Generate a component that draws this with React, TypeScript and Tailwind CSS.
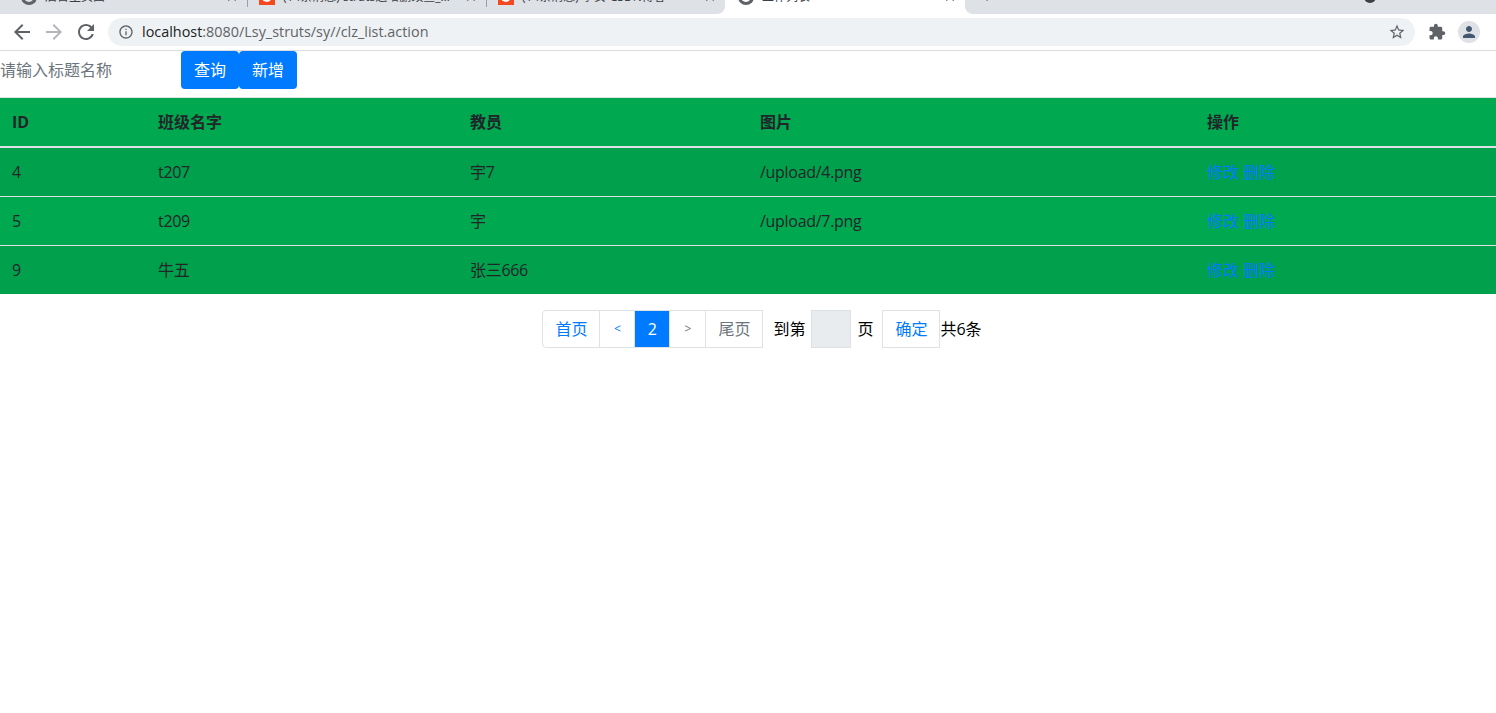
import type { ReactNode } from "react";

const rows = [
  { id: "4", name: "t207", teacher: "宇7", pic: "/upload/4.png", bg: "bg-[#00a04c]", h: "h-[50px]", pad: "pt-px" },
  { id: "5", name: "t209", teacher: "宇", pic: "/upload/7.png", bg: "bg-[#00a84f]", h: "h-[49px] border-t border-[#dee2e6]", pad: "pb-px" },
  { id: "9", name: "牛五", teacher: "张三666", pic: "", bg: "bg-[#00a04c]", h: "h-[48px] border-t border-[#dee2e6]", pad: "pt-px" },
];

const font = "font-['Open_Sans','Noto_Sans_CJK_SC',sans-serif]";

// Material paths, same ones chrome draws in its toolbar
const icons = {
  back: "M20 11H7.83l5.59-5.59L12 4l-8 8 8 8 1.41-1.41L7.83 13H20v-2z",
  forward: "M12 4l-1.41 1.41L16.17 11H4v2h12.17l-5.58 5.59L12 20l8-8z",
  reload:
    "M17.65 6.35C16.2 4.9 14.21 4 12 4c-4.42 0-7.99 3.58-7.99 8s3.57 8 7.99 8c3.73 0 6.84-2.55 7.73-6h-2.08c-.82 2.33-3.04 4-5.65 4-3.31 0-6-2.69-6-6s2.69-6 6-6c1.66 0 3.14.69 4.22 1.78L13 11h7V4l-2.35 2.35z",
  info: "M11 7h2v2h-2zm0 4h2v6h-2zm1-9C6.48 2 2 6.48 2 12s4.48 10 10 10 10-4.48 10-10S17.52 2 12 2zm0 18c-4.41 0-8-3.59-8-8s3.59-8 8-8 8 3.59 8 8-3.59 8-8 8z",
  star: "M22 9.24l-7.19-.62L12 2 9.19 8.63 2 9.24l5.46 4.73L5.82 21 12 17.27 18.18 21l-1.63-7.03L22 9.24zM12 15.4l-3.76 2.27 1-4.28-3.32-2.88 4.38-.38L12 6.1l1.71 4.04 4.38.38-3.32 2.88 1 4.28L12 15.4z",
  puzzle:
    "M20.5 11H19V7c0-1.1-.9-2-2-2h-4V3.5C13 2.12 11.88 1 10.5 1S8 2.12 8 3.5V5H4c-1.1 0-1.99.9-1.99 2v3.8H3.5c1.49 0 2.7 1.21 2.7 2.7s-1.21 2.7-2.7 2.7H2V20c0 1.1.9 2 2 2h3.8v-1.5c0-1.49 1.21-2.7 2.7-2.7 1.49 0 2.7 1.21 2.7 2.7V22H17c1.1 0 2-.9 2-2v-4h1.5c1.38 0 2.5-1.12 2.5-2.5S21.88 11 20.5 11z",
  person: "M12 12c2.21 0 4-1.79 4-4s-1.79-4-4-4-4 1.79-4 4 1.79 4 4 4zm0 2c-2.67 0-8 1.34-8 4v2h16v-2c0-2.66-5.33-4-8-4z",
  close: "M19 6.41L17.59 5 12 10.59 6.41 5 5 6.41 10.59 12 5 17.59 6.41 19 12 13.41 17.59 19 19 17.59 13.41 12z",
  plus: "M19 13h-6v6h-2v-6H5v-2h6V5h2v6h6v2z",
};

function Icon({ d, size, cls }: { d: string; size: number; cls: string }) {
  return (
    <svg width={size} height={size} viewBox="0 0 24 24" fill="currentColor" className={`shrink-0 ${cls}`}>
      <path d={d} />
    </svg>
  );
}

function Favicon({ csdn }: { csdn?: boolean }) {
  if (csdn) {
    return (
      <span className="flex h-4 w-4 shrink-0 items-center justify-center bg-[#f4481e]">
        <span className="h-[10px] w-[10px] rounded-full border-2 border-white border-r-transparent" />
      </span>
    );
  }
  return <span className="h-4 w-4 shrink-0 rounded-full border-[3px] border-[#5f6368] border-t-[#c4c6c9]" />;
}

function TabBody({ title, csdn }: { title: string; csdn?: boolean }) {
  return (
    <div className="-mt-[11px] flex h-[16px] w-full items-center gap-2 text-xs text-[#3c4043]">
      <Favicon csdn={csdn} />
      <span className="flex-1 truncate">{title}</span>
      <Icon d={icons.close} size={14} cls="text-[#5f6368]" />
    </div>
  );
}

function PageLink({ children, cls }: { children: ReactNode; cls: string }) {
  return (
    <span className={`flex h-[38px] items-center justify-center border border-[#dee2e6] ${cls}`}>
      {children}
    </span>
  );
}

export default function App() {
  return (
    <div className={`${font} h-[713px] w-[1496px] overflow-hidden bg-white text-base text-[#212529]`}>
      {/* browser chrome */}
      <div className="flex h-[14px] overflow-hidden bg-white">
        <div className="flex w-[725px] items-start rounded-br-lg bg-[#dee1e6] pl-[21px]">
          <div className="flex h-[7px] w-[227px] items-start border-r border-[#9aa0a6] pr-[8px]">
            <TabBody title="后台主页面" />
          </div>
          <div className="flex h-[7px] w-[239px] items-start border-r border-[#9aa0a6] pr-[8px] pl-[11px]">
            <TabBody title="(14条消息) struts之增删改查_李安" csdn />
          </div>
          <div className="flex h-[7px] w-[238px] items-start pr-[8px] pl-[11px]">
            <TabBody title="(14条消息) 李安-CSDN博客" csdn />
          </div>
        </div>
        <div className="flex w-[240px] items-start pr-[8px] pl-[13px]">
          <TabBody title="工作列表" />
        </div>
        <div className="flex flex-1 items-start rounded-bl-lg bg-[#dee1e6] pl-[14px]">
          <Icon d={icons.plus} size={16} cls="-mt-[12px] text-[#5f6368]" />
          <span className="-mt-[9px] ml-[369px] h-3 w-3 rounded-full bg-[#3c4043]" />
        </div>
      </div>
      <div className="flex h-[37px] items-center border-b border-[#dadce0] bg-white pr-[16px] pl-[10px]">
        <Icon d={icons.back} size={24} cls="text-[#5f6368]" />
        <Icon d={icons.forward} size={24} cls="ml-[8px] text-[#b4b6b9]" />
        <Icon d={icons.reload} size={24} cls="ml-[8px] text-[#5f6368]" />
        <div className="ml-[10px] flex h-[28px] flex-1 items-center rounded-full bg-[#eff2f4] pr-[9px] pl-[10px]">
          <Icon d={icons.info} size={16} cls="text-[#5f6368]" />
          <span className="ml-[8px] text-[14.4px] text-[#202124]">
            localhost<span className="text-[#5f6368]">:8080/Lsy_struts/sy//clz_list.action</span>
          </span>
          <Icon d={icons.star} size={18} cls="ml-auto text-[#5f6368]" />
        </div>
        <Icon d={icons.puzzle} size={18} cls="ml-[13px] text-[#5f6368]" />
        <div className="ml-[12px] flex h-[22px] w-[22px] items-center justify-center rounded-full bg-[#dee1e6]">
          <Icon d={icons.person} size={18} cls="text-[#45566f]" />
        </div>
      </div>

      {/* search bar */}
      <div className="flex h-[46px] items-start">
        <div className="flex h-[38px] w-[181px] items-center text-[#6c757d]">请输入标题名称</div>
        <button className="h-[38px] w-[58px] rounded bg-[#007bff] text-white">查询</button>
        <button className="h-[38px] w-[58px] rounded bg-[#007bff] text-white">新增</button>
      </div>

      {/* list */}
      <table className="w-full table-fixed border-collapse bg-[#00a84f]">
        <thead>
          <tr className="h-[49px] border-t border-b-2 border-[#dee2e6] text-left">
            <th className="w-[146px] px-3">ID</th>
            <th className="w-[312px] px-3">班级名字</th>
            <th className="w-[290px] px-3">教员</th>
            <th className="w-[447px] px-3">图片</th>
            <th className="px-3">操作</th>
          </tr>
        </thead>
        <tbody>
          {rows.map((r) => (
            <tr key={r.id} className={`${r.h} ${r.bg}`}>
              <td className={`px-3 tracking-[-0.3px] ${r.pad}`}>{r.id}</td>
              <td className={`px-3 tracking-[-0.3px] ${r.pad}`}>{r.name}</td>
              <td className={`px-3 tracking-[-0.3px] ${r.pad}`}>{r.teacher}</td>
              <td className={`px-3 tracking-[-0.3px] ${r.pad}`}>{r.pic}</td>
              <td className={`px-3 text-[#007bff] ${r.pad}`}>修改 删除</td>
            </tr>
          ))}
        </tbody>
      </table>

      {/* pagination */}
      <div className="mt-4 flex h-[38px] items-center justify-center pl-[28px]">
        <PageLink cls="w-[58px] rounded-l text-[#007bff]">首页</PageLink>
        <PageLink cls="-ml-px w-[36px] text-xs text-[#007bff]">&lt;</PageLink>
        <PageLink cls="-ml-px w-[36px] border-[#007bff] bg-[#007bff] text-white">2</PageLink>
        <PageLink cls="-ml-px w-[37px] text-xs text-[#6c757d]">&gt;</PageLink>
        <PageLink cls="-ml-px w-[58px] text-[#6c757d]">尾页</PageLink>
        <span className="ml-[10px] text-black">到第</span>
        <span className="ml-[6px] h-[38px] w-[40px] border border-[#dee2e6] bg-[#e9ecef]" />
        <span className="ml-[6px] text-black">页</span>
        <span className="ml-[9px] flex h-[38px] w-[58px] items-center justify-center border border-[#dee2e6] text-[#007bff]">确定</span>
        <span className="text-black">共6条</span>
      </div>
    </div>
  );
}
